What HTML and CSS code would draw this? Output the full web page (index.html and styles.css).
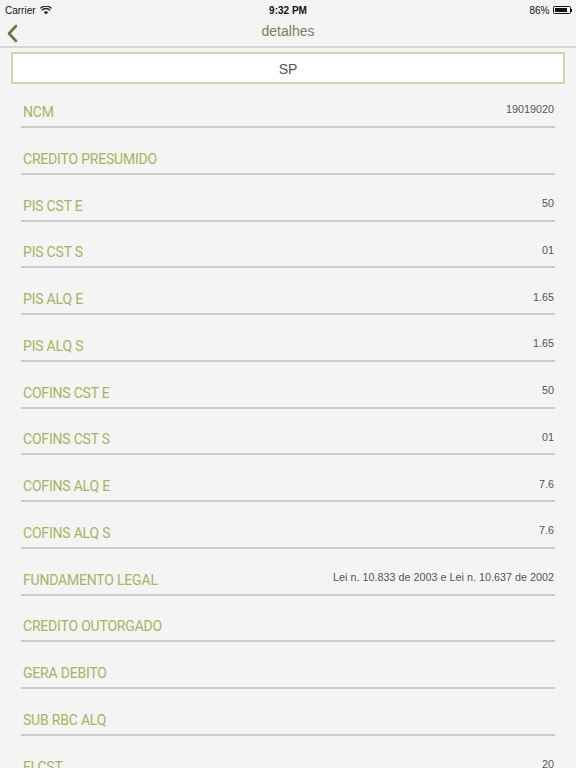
FILE: index.html
```html
<!DOCTYPE html>
<html>
<head>
<meta charset="utf-8">
<link rel="stylesheet" href="styles.css">
</head>
<body>
<div class="status">
  <div class="status-left">Carrier
    <svg class="wifi" width="12" height="9" viewBox="0 0 12 9"><path d="M6 8.6 L8.2 6.2 A3.2 3.2 0 0 0 3.8 6.2 Z" fill="#222"/><path d="M1.8 4.2 A6 6 0 0 1 10.2 4.2" stroke="#222" stroke-width="1.4" fill="none"/><path d="M0.4 2.4 A8 8 0 0 1 11.6 2.4" stroke="#222" stroke-width="1.3" fill="none"/></svg>
  </div>
  <div class="status-time">9:32 PM</div>
  <div class="status-right">86%
    <span class="battery"><span class="battery-fill"></span></span><span class="battery-tip"></span>
  </div>
</div>
<div class="nav">
  <svg class="back" width="13" height="19" viewBox="0 0 13 19"><path d="M10 2 L3 9.5 L10 17" stroke="#6d7444" stroke-width="2.6" fill="none" stroke-linecap="round" stroke-linejoin="round"/></svg>
  <div class="nav-title">detalhes</div>
</div>
<div class="content">
  <div class="state-box">SP</div>
  <div class="list">
    <div class="row"><span class="label">NCM</span><span class="value">19019020</span></div>
    <div class="row"><span class="label">CREDITO PRESUMIDO</span><span class="value"></span></div>
    <div class="row"><span class="label">PIS CST E</span><span class="value">50</span></div>
    <div class="row"><span class="label">PIS CST S</span><span class="value">01</span></div>
    <div class="row"><span class="label">PIS ALQ E</span><span class="value">1.65</span></div>
    <div class="row"><span class="label">PIS ALQ S</span><span class="value">1.65</span></div>
    <div class="row"><span class="label">COFINS CST E</span><span class="value">50</span></div>
    <div class="row"><span class="label">COFINS CST S</span><span class="value">01</span></div>
    <div class="row"><span class="label">COFINS ALQ E</span><span class="value">7.6</span></div>
    <div class="row"><span class="label">COFINS ALQ S</span><span class="value">7.6</span></div>
    <div class="row"><span class="label">FUNDAMENTO LEGAL</span><span class="value">Lei n. 10.833 de 2003 e Lei n. 10.637 de 2002</span></div>
    <div class="row"><span class="label">CREDITO OUTORGADO</span><span class="value"></span></div>
    <div class="row"><span class="label">GERA DEBITO</span><span class="value"></span></div>
    <div class="row"><span class="label">SUB RBC ALQ</span><span class="value"></span></div>
    <div class="row"><span class="label">FLCST</span><span class="value">20</span></div>
  </div>
</div>
</body>
</html>
```
FILE: styles.css
```css
* { box-sizing: border-box; }
html, body {
  margin: 0;
  padding: 0;
  background: #f4f4f4;
  height: 768px;
  overflow: hidden;
  font-family: "Liberation Sans", Arial, sans-serif;
}
.status {
  height: 20px;
  display: flex;
  align-items: center;
  justify-content: space-between;
  padding: 0 4px 0 5px;
  font-size: 10px;
  color: #111;
  position: relative;
}
.status-left { display: flex; align-items: center; gap: 4px; }
.status-time {
  position: absolute;
  left: 0; right: 0;
  text-align: center;
  font-weight: bold;
  pointer-events: none;
}
.status-right { display: flex; align-items: center; gap: 3px; }
.battery {
  width: 18px;
  height: 8px;
  border: 1px solid #111;
  border-radius: 1.5px;
  padding: 1px;
  display: flex;
}
.battery-fill { width: 86%; background: #111; }
.battery-tip { width: 1.5px; height: 3px; background: #111; margin-left: -3px; }
.nav {
  display: flex;
  align-items: center;
  position: relative;
  border-bottom: 2px solid #d6d6d6;
  height: 28px;
}
.back { margin-left: 6px; margin-top: 1px; }
.nav-title {
  position: absolute;
  left: 0; right: 0;
  top: 3px;
  text-align: center;
  font-size: 14px;
  color: #7a8052;
}
.content {
  padding: 4px 11px 0 11px;
}
.state-box {
  height: 32px;
  background: #fff;
  border: 2px solid #cdd8a4;
  display: flex;
  align-items: center;
  justify-content: center;
  font-size: 14px;
  color: #555;
  padding-top: 1px;
}
.list {
  padding: 0 10px;
  margin-top: -2.8px;
}
.row {
  height: 46.78px;
  border-bottom: 2px solid #cdcdcd;
  display: flex;
  align-items: flex-end;
  justify-content: space-between;
  padding: 0 1px 5px 2px;
}
.label {
  font-family: Roboto, "Liberation Sans", sans-serif;
  font-size: 14px;
  line-height: 17px;
  letter-spacing: -0.2px;
  color: #a5b55c;
}
.value {
  font-size: 10.8px;
  line-height: 13px;
  color: #555;
  margin-bottom: 4.5px;
}
```
